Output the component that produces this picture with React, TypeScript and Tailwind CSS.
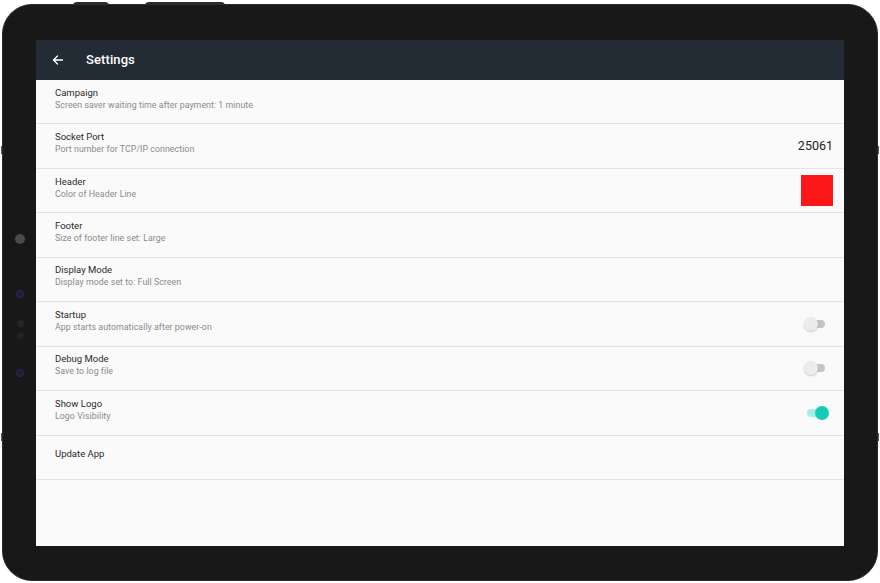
import React from "react";

type Row = { title: string; sub?: string; right?: "port" | "color" | "off" | "on" };

const rows: Row[] = [
  { title: "Campaign", sub: "Screen saver waiting time after payment: 1 minute" },
  { title: "Socket Port", sub: "Port number for TCP/IP connection", right: "port" },
  { title: "Header", sub: "Color of Header Line", right: "color" },
  { title: "Footer", sub: "Size of footer line set: Large" },
  { title: "Display Mode", sub: "Display mode set to: Full Screen" },
  { title: "Startup", sub: "App starts automatically after power-on", right: "off" },
  { title: "Debug Mode", sub: "Save to log file", right: "off" },
  { title: "Show Logo", sub: "Logo Visibility", right: "on" },
  { title: "Update App" },
];

function Toggle({ on }: { on: boolean }) {
  return (
    <div className="relative w-[22px] h-[14px] mr-[6px] flex items-center">
      <div className={`w-[18px] h-[8px] rounded-full ml-[2px] ${on ? "bg-[#a6ede4]" : "bg-[#c4c4c4]"}`} />
      <div
        className={`absolute top-0 w-[14px] h-[14px] rounded-full ${
          on ? "right-[-2px] bg-[#14cdb8]" : "left-[-1px] bg-[#ececec] shadow-[0_1px_2px_rgba(0,0,0,0.2)]"
        }`}
      />
    </div>
  );
}

export default function App() {
  return (
    <div className="w-[880px] h-[583px] bg-white relative overflow-hidden" style={{ fontFamily: "Roboto, 'Noto Sans', sans-serif" }}>
      {/* hardware buttons on the frame edge */}
      <div className="absolute left-[73px] top-[2px] w-[36px] h-[4px] rounded-t bg-[#2a2a2a]" />
      <div className="absolute left-[145px] top-[2px] w-[80px] h-[4px] rounded-t bg-[#2a2a2a]" />
      <div className="absolute left-[1px] top-[146px] w-[2px] h-[8px] bg-[#555]" />
      <div className="absolute left-[1px] top-[433px] w-[2px] h-[8px] bg-[#555]" />
      <div className="absolute right-[1px] top-[146px] w-[2px] h-[8px] bg-[#555]" />
      <div className="absolute right-[1px] top-[433px] w-[2px] h-[8px] bg-[#555]" />
      <div className="absolute left-[2px] top-[4px] w-[876px] h-[577px] rounded-[30px] bg-[#181818] border border-[#2c2c2c] flex">
        {/* left bezel with sensors */}
        <div className="w-[33px] h-full flex flex-col items-center pt-[229px] pl-[1px]">
          <div className="w-[10px] h-[10px] rounded-full bg-[#4a4a4a]" />
          <div className="mt-[46px] w-[8px] h-[8px] rounded-full bg-[#1e1d33] border border-[#2d2a5a]" />
          <div className="mt-[22px] w-[7px] h-[7px] rounded-full bg-[#262626]" />
          <div className="mt-[5px] w-[7px] h-[7px] rounded-full bg-[#222]" />
          <div className="mt-[30px] w-[8px] h-[8px] rounded-full bg-[#1e1d33] border border-[#2d2a5a]" />
        </div>
        <div className="mt-[35px] w-[808px] h-[506px] bg-[#fafafa] flex flex-col">
          <div className="h-[40px] bg-[#232c35] flex items-center shrink-0">
            <svg className="ml-[16px]" width="12" height="12" viewBox="0 0 24 24" fill="none" stroke="white" strokeWidth="2.6" strokeLinecap="round" strokeLinejoin="round">
              <path d="M21 12H3M11 4l-8 8 8 8" />
            </svg>
            <span className="ml-[22px] text-white text-[13px] font-medium tracking-[0.1px]">Settings</span>
          </div>
          {rows.map((r) => (
            <div key={r.title} className="h-[44.44px] shrink-0 border-b border-[#e3e3e3] flex items-center pl-[19px] pr-[11px]">
              <div className="flex-1 flex flex-col justify-center mb-[6px]">
                <div className="text-[9.5px] text-[#2a2a2a] leading-[12px] font-normal">{r.title}</div>
                {r.sub && <div className="text-[8.8px] text-[#8a8a8a] leading-[12px] tracking-[0.05px]">{r.sub}</div>}
              </div>
              {r.right === "port" && <span className="text-[12.5px] text-[#222]">25061</span>}
              {r.right === "color" && <div className="w-[32px] h-[31px] bg-[#fc1719] mt-[-1px]" />}
              {r.right === "off" && <Toggle on={false} />}
              {r.right === "on" && <Toggle on={true} />}
            </div>
          ))}
        </div>
      </div>
    </div>
  );
}
